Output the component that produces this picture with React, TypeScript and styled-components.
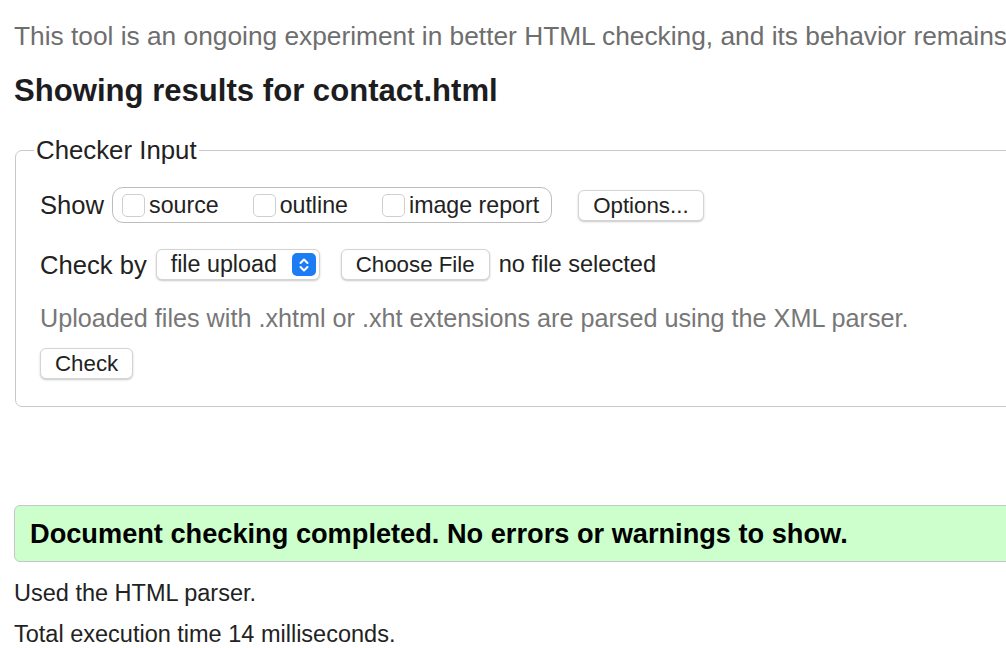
import React from "react";
import styled, { createGlobalStyle } from "styled-components";

const GlobalStyle = createGlobalStyle`
  html, body {
    margin: 0;
    padding: 0;
    background: #fff;
    overflow: hidden;
  }

  body {
    font-family: "Liberation Sans", Arial, sans-serif;
    color: #222;
  }
`;

/**
 * Page wrapper, wider than the viewport so the right edge is cut off.
 */
const Page = styled.div`
  width: 1200px;
  padding: 20px 0 0 14px;
`;

const Intro = styled.p`
  margin: 0;
  font-size: 26.3px;
  line-height: 32px;
  color: #6e6e6e;
  white-space: nowrap;
`;

const Heading = styled.h2`
  margin: 21px 0 0;
  font-size: 31.1px;
  line-height: 36px;
  font-weight: bold;
  color: #1d1d1f;
`;

const Fieldset = styled.fieldset`
  margin: 26px 0 0 1px;
  padding: 0 0 27px 18px;
  border: 1.5px solid #c9c9c9;
  border-radius: 7px;
`;

const Legend = styled.legend`
  padding: 0 2px;
  font-size: 25.8px;
  line-height: 30px;
  color: #222;
`;

const Rows = styled.div`
  padding-left: 6px;
`;

interface RowProps {
  /**
   * Space above the row.
   */
  top: number;
}

const Row = styled.div<RowProps>`
  display: flex;
  align-items: center;
  margin-top: ${(props) => props.top}px;
`;

const Label = styled.span`
  font-size: 25.6px;
  line-height: 30px;
  color: #222;
`;

const Group = styled.div`
  display: flex;
  align-items: center;
  gap: 34px;
  height: 34px;
  margin-left: 8px;
  padding: 0 12px 0 9px;
  border: 1.5px solid #bdbdbd;
  border-radius: 11px;
`;

const Choice = styled.label`
  display: flex;
  align-items: center;
  gap: 4px;
  font-size: 23.2px;
  color: #222;
`;

const Box = styled.span`
  width: 23px;
  height: 23px;
  border: 1px solid #cfcfcf;
  border-radius: 5px;
  background: #fff;
  box-sizing: border-box;
`;

interface ButtonProps {
  /**
   * Space to the left of the button.
   */
  left?: number;
}

const Button = styled.button<ButtonProps>`
  margin-left: ${(props) => props.left ?? 0}px;
  height: 31px;
  padding: 0 14px;
  border: 0.5px solid #d4d4d4;
  border-radius: 6px;
  background: #fff;
  box-shadow: 0 1px 2px rgba(0, 0, 0, 0.22);
  font-family: "Liberation Sans", Arial, sans-serif;
  font-size: 22.3px;
  line-height: 29px;
  color: #222;
`;

const Select = styled.div`
  display: flex;
  align-items: center;
  justify-content: space-between;
  width: 164px;
  height: 31px;
  margin-left: 9px;
  padding: 0 3px 0 14px;
  box-sizing: border-box;
  border: 0.5px solid #d4d4d4;
  border-radius: 6px;
  background: #fff;
  box-shadow: 0 1px 2px rgba(0, 0, 0, 0.22);
  font-size: 23.3px;
  color: #222;
`;

const Stepper = styled.span`
  display: flex;
  align-items: center;
  justify-content: center;
  width: 24px;
  height: 23px;
  border-radius: 5px;
  background: #1b7cf4;
`;

const FileName = styled.span`
  margin-left: 9px;
  font-size: 23.6px;
  color: #222;
`;

const Note = styled.p`
  margin: 23px 0 0;
  font-size: 25.2px;
  line-height: 30px;
  color: #777;
`;

const Status = styled.div`
  margin-top: 98px;
  height: 57px;
  box-sizing: border-box;
  display: flex;
  align-items: center;
  padding-left: 15px;
  border: 1.5px solid #c6c6c6;
  border-radius: 6px;
  background: #ccffcc;
  font-size: 27.2px;
  font-weight: bold;
  color: #000;
`;

interface LineProps {
  /**
   * Space above the line.
   */
  top: number;
}

const Line = styled.p<LineProps>`
  margin: ${(props) => props.top}px 0 0;
  font-size: 23.5px;
  line-height: 28px;
  color: #222;
`;

/**
 * Up/down chevrons of the select control.
 */
const StepperIcon: React.FC = () => (
  <svg width="10" height="16" viewBox="0 0 10 16" fill="none">
    <path
      d="M1.5 6 L5 2.5 L8.5 6 M1.5 10 L5 13.5 L8.5 10"
      stroke="#fff"
      strokeWidth="2"
      strokeLinecap="round"
      strokeLinejoin="round"
    />
  </svg>
);

const App: React.FC = () => {
  const options = ["source", "outline", "image report"];

  return (
    <>
      <GlobalStyle />
      <Page>
        <Intro>
          This tool is an ongoing experiment in better HTML checking, and its
          behavior remains
        </Intro>
        <Heading>Showing results for contact.html</Heading>

        <Fieldset>
          <Legend>Checker Input</Legend>
          <Rows>
            <Row top={22}>
              <Label>Show</Label>
              <Group>
                {options.map((option) => (
                  <Choice key={option}>
                    <Box />
                    {option}
                  </Choice>
                ))}
              </Group>
              <Button left={26}>Options...</Button>
            </Row>

            <Row top={26}>
              <Label>Check by</Label>
              <Select>
                file upload
                <Stepper>
                  <StepperIcon />
                </Stepper>
              </Select>
              <Button left={21}>Choose File</Button>
              <FileName>no file selected</FileName>
            </Row>

            <Note>
              Uploaded files with .xhtml or .xht extensions are parsed using the
              XML parser.
            </Note>

            <Row top={15}>
              <Button>Check</Button>
            </Row>
          </Rows>
        </Fieldset>

        <Status>Document checking completed. No errors or warnings to show.</Status>
        <Line top={17}>Used the HTML parser.</Line>
        <Line top={13}>Total execution time 14 milliseconds.</Line>
      </Page>
    </>
  );
};

export default App;
